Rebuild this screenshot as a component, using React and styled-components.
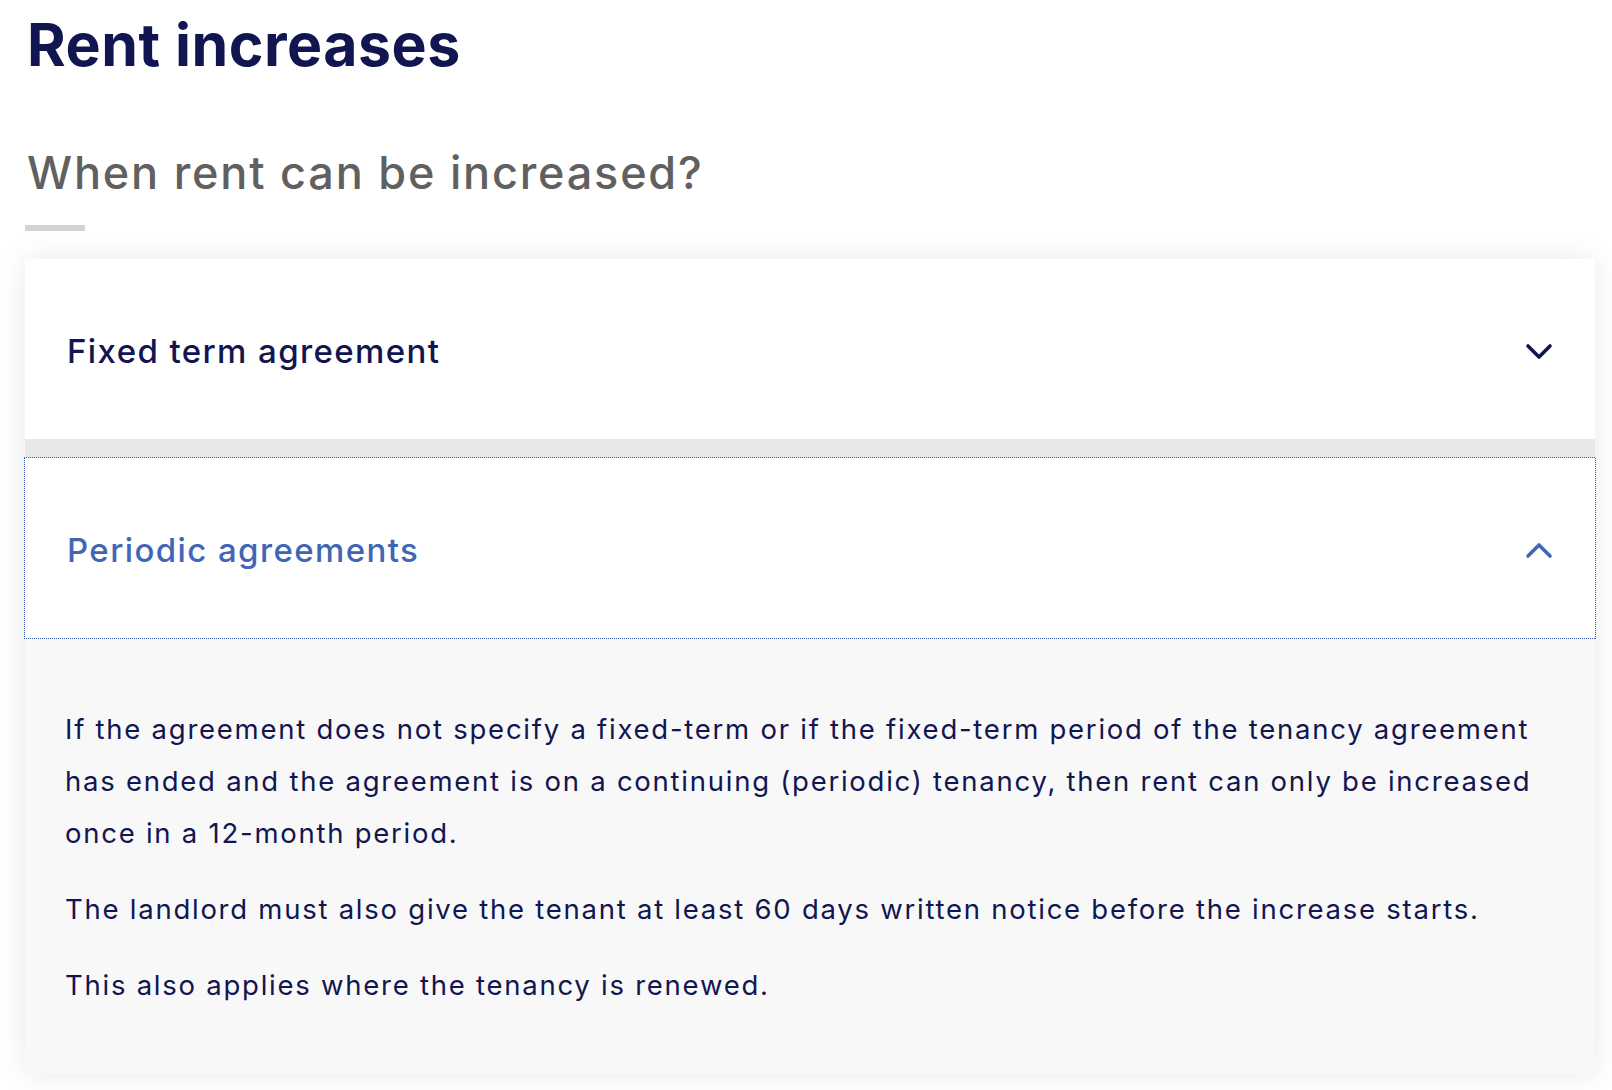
import React, { useState } from 'react';
import styled, { createGlobalStyle, css } from 'styled-components';

const GlobalStyle = createGlobalStyle`
  html, body {
    margin: 0;
    padding: 0;
    background: #ffffff;
  }
  body {
    font-family: Inter, "Open Sans", Arial, sans-serif;
    -webkit-font-smoothing: antialiased;
  }
`;

const navy = '#111651';
const blue = '#4266b6';
const focusBlue = '#3a5cb4';

const Page = styled.div`
  padding: 10px 17px 0 25px;
`;

const Title = styled.h1`
  margin: 0;
  font-size: 59px;
  line-height: 70px;
  font-weight: 700;
  letter-spacing: 0.5px;
  color: ${navy};
  padding-left: 2px;
`;

const Subtitle = styled.h2`
  margin: 66px 0 0;
  font-size: 45px;
  line-height: 54px;
  font-weight: 500;
  letter-spacing: 1.8px;
  color: #606060;
  padding-left: 2px;
`;

const Rule = styled.div`
  width: 60px;
  height: 6px;
  margin-top: 25px;
  background: #d3d3d3;
`;

const Accordion = styled.div`
  margin-top: 28px;
  background: #e8e8e8;
  box-shadow: 0 0 28px rgba(0, 0, 0, 0.09);
`;

const Item = styled.div`
  margin-bottom: 19px;
`;

// dotted focus ring, 1px dots with 1px gaps
const focusRing = css`
  &::after {
    content: '';
    position: absolute;
    inset: -1px -1px -1px -1px;
    pointer-events: none;
    background:
      repeating-linear-gradient(90deg, ${focusBlue} 0 1px, transparent 1px 2px) top / 100% 1px no-repeat,
      repeating-linear-gradient(90deg, ${focusBlue} 0 1px, transparent 1px 2px) bottom / 100% 1px no-repeat,
      repeating-linear-gradient(0deg, ${focusBlue} 0 1px, transparent 1px 2px) left / 1px 100% no-repeat,
      repeating-linear-gradient(0deg, ${focusBlue} 0 1px, transparent 1px 2px) right / 1px 100% no-repeat;
  }
`;

const Header = styled.button`
  position: relative;
  display: flex;
  align-items: center;
  justify-content: space-between;
  width: 100%;
  height: 180px;
  padding: 4px 42px 0 42px;
  box-sizing: border-box;
  border: 0;
  background: #ffffff;
  cursor: pointer;
  font-family: inherit;
  text-align: left;
  outline: none;
  color: ${(p) => (p.$open ? blue : navy)};
  ${(p) => p.$focused && focusRing}
`;

const HeaderText = styled.span`
  font-size: 33px;
  font-weight: 500;
  letter-spacing: 1.4px;
`;

const Panel = styled.div`
  background: #f8f8f8;
  padding: 65px 40px 63px;
`;

const Para = styled.p`
  margin: 0 0 24px;
  font-size: 27.5px;
  line-height: 52px;
  letter-spacing: 1.75px;
  color: ${navy};
  &:last-child {
    margin-bottom: 0;
  }
`;

const Chevron = ({ up }) => (
  <svg width="28" height="17" viewBox="0 0 28 17" fill="none">
    <path
      d={up ? 'M3 14L14 3L25 14' : 'M3 3L14 14L25 3'}
      stroke="currentColor"
      strokeWidth="3.6"
      strokeLinecap="round"
      strokeLinejoin="round"
    />
  </svg>
);

const items = [
  {
    title: 'Fixed term agreement',
    body: [],
  },
  {
    title: 'Periodic agreements',
    body: [
      'If the agreement does not specify a fixed-term or if the fixed-term period of the tenancy agreement has ended and the agreement is on a continuing (periodic) tenancy, then rent can only be increased once in a 12-month period.',
      'The landlord must also give the tenant at least 60 days written notice before the increase starts.',
      'This also applies where the tenancy is renewed.',
    ],
  },
];

export default function App() {
  const [open, setOpen] = useState(1);
  return (
    <Page>
      <GlobalStyle />
      <Title>Rent increases</Title>
      <Subtitle>When rent can be increased?</Subtitle>
      <Rule />
      <Accordion>
        {items.map((item, i) => (
          <Item key={item.title}>
            <Header
              $open={open === i}
              $focused={open === i}
              onClick={() => setOpen(open === i ? -1 : i)}
            >
              <HeaderText>{item.title}</HeaderText>
              <Chevron up={open === i} />
            </Header>
            {open === i && (
              <Panel>
                {item.body.map((t) => <Para key={t}>{t}</Para>)}
              </Panel>
            )}
          </Item>
        ))}
      </Accordion>
    </Page>
  );
}
